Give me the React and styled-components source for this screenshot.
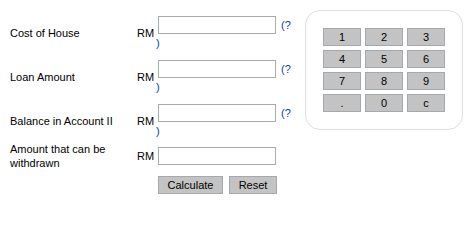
import React, { useState } from "react";
import styled, { createGlobalStyle } from "styled-components";

const GlobalStyle = createGlobalStyle`
  html, body {
    margin: 0;
    padding: 0;
    background: #ffffff;
  }
  body {
    font-family: "Liberation Sans", Arial, sans-serif;
    font-size: 11px;
    color: #000000;
  }
`;

const fields = [
  { id: "cost", label: "Cost of House", help: true, top: 16 },
  { id: "loan", label: "Loan Amount", help: true, top: 10 },
  { id: "balance", label: "Balance in Account II", help: true, top: 10 },
  { id: "withdraw", label: "Amount that can be withdrawn", help: false, top: 4 },
];

const keys = ["1", "2", "3", "4", "5", "6", "7", "8", "9", ".", "0", "c"];

export default function App() {
  const [values, setValues] = useState({});

  const update = (id) => (e) => setValues({ ...values, [id]: e.target.value });

  return (
    <>
      <GlobalStyle />
      <Page>
        <Form>
          {fields.map((f) => (
            <Row key={f.id} $top={f.top}>
              <Label>{f.label}</Label>
              <Currency>RM</Currency>
              <InputCell>
                <InputLine>
                  <TextBox value={values[f.id] || ""} onChange={update(f.id)} />
                  {f.help && <Help href="#">(?</Help>}
                </InputLine>
                {f.help && <HelpTail href="#">)</HelpTail>}
              </InputCell>
            </Row>
          ))}
          <Row $top={6}>
            <span />
            <span />
            <Actions>
              <FormButton $width={65}>Calculate</FormButton>
              <FormButton $width={48} onClick={() => setValues({})}>
                Reset
              </FormButton>
            </Actions>
          </Row>
        </Form>
        <Keypad>
          {keys.map((k) => (
            <Key key={k}>{k}</Key>
          ))}
        </Keypad>
      </Page>
    </>
  );
}

const Page = styled.div`
  display: flex;
  align-items: flex-start;
  width: 472px;
`;

const Form = styled.div`
  display: flex;
  flex-direction: column;
  padding-left: 10px;
  width: 280px;
`;

const Row = styled.div`
  display: grid;
  grid-template-columns: 127px 19px 134px;
  align-items: center;
  margin-top: ${(p) => p.$top}px;
`;

const Label = styled.div`
  line-height: 14px;
  padding-right: 4px;
`;

const Currency = styled.div`
  line-height: 14px;
`;

const InputCell = styled.div`
  display: flex;
  flex-direction: column;
`;

const InputLine = styled.div`
  display: flex;
  align-items: flex-start;
  height: 18px;
`;

const TextBox = styled.input`
  box-sizing: border-box;
  width: 118px;
  height: 18px;
  margin: 0 0 0 2px;
  padding: 1px 3px;
  border: 1px solid #a5acb2;
  font: 11px "Liberation Sans", Arial, sans-serif;
  outline: none;
`;

const Help = styled.a`
  margin-left: 5px;
  line-height: 18px;
  color: #0a3ea6;
  text-decoration: none;
`;

const HelpTail = styled(Help)`
  margin: 2px 0 0 0;
  line-height: 14px;
`;

const Actions = styled.div`
  display: flex;
  gap: 6px;
  padding-left: 2px;
`;

const FormButton = styled.button`
  box-sizing: border-box;
  width: ${(p) => p.$width}px;
  height: 18px;
  margin: 0;
  padding: 0;
  background: #c3c3c3;
  border: 1px solid #a3a9ae;
  font: 11px "Liberation Sans", Arial, sans-serif;
  color: #000000;
  cursor: pointer;
`;

const Keypad = styled.div`
  box-sizing: border-box;
  display: grid;
  grid-template-columns: repeat(3, 38px);
  grid-auto-rows: 18px;
  gap: 4px;
  width: 158px;
  margin: 10px 0 0 15px;
  padding: 17px;
  border: 1px solid #dedede;
  border-radius: 15px;
`;

const Key = styled.button`
  box-sizing: border-box;
  margin: 0;
  padding: 0;
  background: #c3c3c3;
  border: 1px solid #a3a9ae;
  font: 11px "Liberation Sans", Arial, sans-serif;
  color: #000000;
  cursor: pointer;
`;
